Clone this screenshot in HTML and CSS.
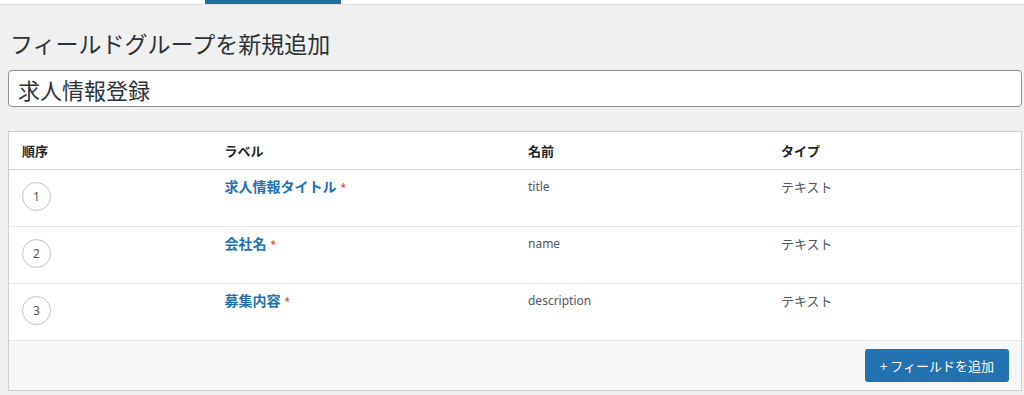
FILE: index.html
```html
<!DOCTYPE html>
<html lang="ja">
<head>
  <meta charset="UTF-8" />
  <title>フィールドグループを新規追加</title>
  <link rel="stylesheet" href="styles.css">
</head>
<body>
  <div class="topbar">
    <div class="tab-active"></div>
  </div>

  <div class="wrap">
    <h1 class="page-title">フィールドグループを新規追加</h1>
    <input class="title-input" type="text" value="求人情報登録" />

    <div class="fields">
      <div class="row head">
        <div class="cell">順序</div>
        <div class="cell">ラベル</div>
        <div class="cell">名前</div>
        <div class="cell">タイプ</div>
      </div>

      <div class="row">
        <div class="cell order"><span class="num">1</span></div>
        <div class="cell label"><a href="#">求人情報タイトル</a><span class="req">*</span></div>
        <div class="cell name">title</div>
        <div class="cell type">テキスト</div>
      </div>

      <div class="row">
        <div class="cell order"><span class="num">2</span></div>
        <div class="cell label"><a href="#">会社名</a><span class="req">*</span></div>
        <div class="cell name">name</div>
        <div class="cell type">テキスト</div>
      </div>

      <div class="row">
        <div class="cell order"><span class="num">3</span></div>
        <div class="cell label"><a href="#">募集内容</a><span class="req">*</span></div>
        <div class="cell name">description</div>
        <div class="cell type">テキスト</div>
      </div>

      <div class="fields-footer">
        <button class="add-field">+ フィールドを追加</button>
      </div>
    </div>
  </div>
</body>
</html>
```

FILE: styles.css
```css
body {
  margin: 0;
  background: #f0f0f1;
  font-family: "Noto Sans", "Noto Sans CJK JP", sans-serif;
  color: #1d2327;
}

.topbar {
  height: 4px;
  background: #fff;
  border-bottom: 1px solid #dcdcde;
}

.tab-active {
  margin-left: 205px;
  width: 136px;
  height: 4px;
  background: #1f6e9c;
}

.wrap {
  padding: 0 2px 0 8px;
}

.page-title {
  margin: 24px 0 0 2px;
  font-size: 23px;
  line-height: 30px;
  font-weight: 400;
  color: #2c3338;
}

.title-input {
  display: block;
  box-sizing: border-box;
  width: 100%;
  height: 37px;
  margin-top: 11px;
  padding: 0 9px;
  border: 1px solid #8c8f94;
  border-radius: 4px;
  background: #fff;
  font-family: "Noto Sans CJK JP", sans-serif;
  font-size: 22px;
  color: #2c3338;
}

.fields {
  margin-top: 24px;
  border: 1px solid #ccd0d4;
  background: #fff;
}

.row {
  display: grid;
  grid-template-columns: 20% 30% 25% 25%;
  height: 56px;
  border-bottom: 1px solid #e5e5e5;
}

.row.head {
  height: 37px;
  border-bottom: 1px solid #ccd0d4;
  align-items: center;
  font-size: 13px;
  font-weight: 700;
  color: #1d2327;
}

.cell {
  padding-left: 13px;
}

.row:not(.head) .cell {
  padding-top: 7px;
  font-size: 13px;
  line-height: 20px;
  color: #50575e;
}

.row:not(.head) .cell.order {
  padding-top: 12px;
}

.num {
  display: flex;
  align-items: center;
  justify-content: center;
  box-sizing: border-box;
  width: 29px;
  height: 29px;
  border: 1px solid #c3c4c7;
  border-radius: 50%;
  font-size: 12px;
  color: #50575e;
}

.label a {
  color: #2271b1;
  font-weight: 700;
  font-size: 14px;
  text-decoration: none;
}

.req {
  margin-left: 4px;
  color: #d63638;
  font-size: 10px;
  vertical-align: top;
}

.row:not(.head) .cell.name {
  font-size: 12px;
}

.fields-footer {
  display: flex;
  justify-content: flex-end;
  height: 49px;
  padding: 8px 12px 0 0;
  box-sizing: border-box;
  background: #f6f7f7;
}

.add-field {
  width: 144px;
  height: 33px;
  border: none;
  border-radius: 3px;
  background: #2271b1;
  color: #fff;
  font-family: "Noto Sans CJK JP", sans-serif;
  font-size: 13px;
  cursor: pointer;
}
```
